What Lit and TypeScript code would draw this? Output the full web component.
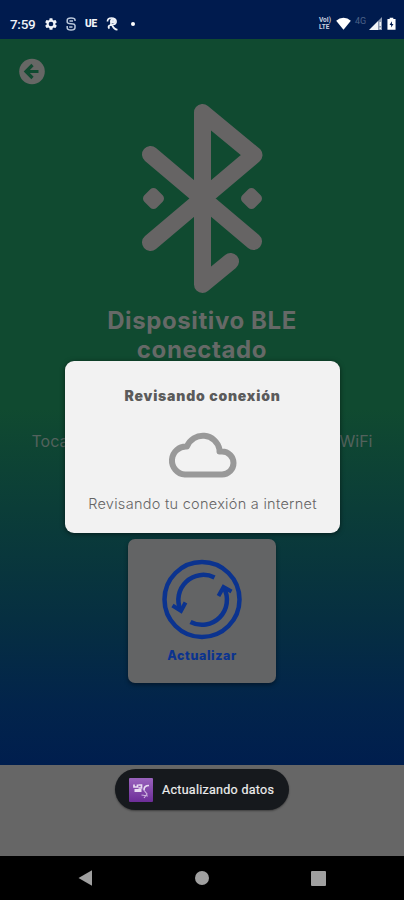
import { LitElement, html, css } from "lit";
import { customElement } from "lit/decorators.js";

@customElement("status-bar")
class StatusBar extends LitElement {
  static styles = css`
    :host { display: flex; height: 39px; background: #001b4e; box-sizing: border-box; padding: 8px 8px 0 10px; align-items: center; justify-content: space-between; font-family: Roboto, sans-serif; color: #f0f3f8; }
    .side { display: flex; align-items: center; }
    .time { font-size: 13.5px; font-weight: 500; letter-spacing: -0.3px; width: 34px; }
    svg { display: block; }
    .ue { font-size: 10px; font-weight: 900; letter-spacing: -0.2px; width: 21px; }
    .volte { display: flex; flex-direction: column; font-size: 6.5px; font-weight: 700; width: 17px; color: #cbd3e0; }
    .volte span { display: block; height: 7px; line-height: 7px; }
    .net { font-size: 9px; color: #4c6287; width: 14px; padding-bottom: 5px; }
    .gear { margin-right: 7px; }
    .shazam { margin-right: 8px; }
    .wifi { margin-right: 4px; }
    .signal { margin-right: 5px; }
    .dot { width: 4px; height: 4px; border-radius: 50%; background: #fff; margin-left: 12px; }
  `;
  render() {
    return html`
      <div class="side">
        <span class="time">7:59</span>
        <svg class="gear" width="14" height="14" viewBox="0 0 24 24" fill="#f0f3f8"><path fill-rule="evenodd" d="M19.4 13a7.500 7.500 0 0 0 0-2l2.200-1.700a.5.5 0 0 0 .1-.6l-2-3.500a.5.5 0 0 0-.6-.2l-2.500 1a7.300 7.300 0 0 0-1.700-1l-.4-2.600a.5.5 0 0 0-.5-.4h-4a.5.5 0 0 0-.5.4L9.100 5a7.700 7.700 0 0 0-1.700 1l-2.500-1a.5.5 0 0 0-.6.2l-2 3.500a.5.5 0 0 0 .1.600L4.600 11a8 8 0 0 0 0 2l-2.200 1.700a.5.5 0 0 0-.1.600l2 3.500c.1.200.4.300.6.200l2.500-1a7.300 7.300 0 0 0 1.700 1l.4 2.600c0 .2.200.4.500.4h4c.2 0 .5-.2.500-.4l.4-2.600a7.700 7.700 0 0 0 1.700-1l2.500 1c.2.100.5 0 .6-.2l2-3.500a.5.5 0 0 0-.1-.6zM12 16a4 4 0 1 1 0-8 4 4 0 0 1 0 8z"/></svg>
        <svg class="shazam" width="12" height="14" viewBox="0 0 12 14" fill="none" stroke="#bccadd" stroke-width="1.500"><path d="M10 4V3Q10 1 6 1T2.200 3.500V5Q2.200 6.700 6 6.700T10 8.500V10.500Q10 13 6 13T2.200 10.500V9M4.500 4H8M4.200 10H7.500"/></svg>
        <span class="ue">UE</span>
        <svg width="13" height="14" viewBox="0 0 13 14" fill="none" stroke="#f0f3f8" stroke-width="1.700"><path d="M1.500 4.500Q1.500 1 5.500 1T10 4T7 7.500L3.500 8.500Q1.500 10 3.500 11.500M6 8Q8.500 13 11.500 12.500M5 3.500V8"/><circle cx="7" cy="3.800" r="1.900" fill="#d5dce8"/></svg>
        <i class="dot"></i>
      </div>
      <div class="side">
        <div class="volte"><span>VoI)</span><span>LTE</span></div>
        <svg class="wifi" width="15" height="13" viewBox="0 0 15 13"><path fill="#fff" d="M7.500 12.800L.2 3.700Q3.300.7 7.500.7T14.800 3.700Z"/></svg>
        <span class="net">4G</span>
        <svg class="signal" width="13" height="13" viewBox="0 0 13 13"><path fill="#f3f5f8" d="M0 13L9 4V13Z"/><path fill="#8e9ab2" d="M9 4L13 0V13H9Z"/><path fill="#f3f5f8" d="M10.500 5H12V9H10.500ZM10.500 10.500H12V12H10.500Z"/></svg>
        <svg width="9" height="14" viewBox="0 0 10 14"><path fill="#fff" d="M3 0H7V1.500H9.500V13.500H.5V1.500H3Z"/><path fill="#001b4e" d="M5.500 4L2.800 8H4.600V11L7.200 7H5.500Z"/></svg>
      </div>`;
  }
}

@customElement("bluetooth-mark")
class BluetoothMark extends LitElement {
  static styles = css`:host { display: block; width: 124px; height: 192px; } svg { display: block; }`;
  render() {
    return html`<svg width="124" height="192" viewBox="140 102 124 192" fill="none" stroke="#666464" stroke-width="17" stroke-linecap="round" stroke-linejoin="round">
      <path d="M150.500 154.500L253.500 241.500M150.500 242.500L254 155L202.500 112.500V284.500L230.500 261.500"/>
      <g fill="#666464" stroke-width="9"><path d="M153.500 192.500L159.500 198.500L153.500 204.500L147.500 198.500Z"/><path d="M251.500 192.500L257.500 198.500L251.500 204.500L245.500 198.500Z"/></g>
    </svg>`;
  }
}

@customElement("nav-bar")
class NavBar extends LitElement {
  static styles = css`:host { display: flex; height: 44px; background: #000; justify-content: space-between; align-items: center; padding: 0 78px; box-sizing: border-box; } svg { display: block; }`;
  render() {
    return html`
      <svg width="15" height="16" viewBox="0 0 15 16"><path fill="#a0a0a0" d="M.5 8L14 .3V15.700Z"/></svg>
      <svg width="14" height="14" viewBox="0 0 14 14"><circle cx="7" cy="7" r="7" fill="#a0a0a0"/></svg>
      <svg width="15" height="15" viewBox="0 0 15 15"><rect width="15" height="15" rx="1" fill="#a0a0a0"/></svg>`;
  }
}

@customElement("app-root")
class AppRoot extends LitElement {
  static styles = css`
    :host { display: block; position: relative; width: 404px; height: 900px; overflow: hidden; background: #666; font-family: Inter, sans-serif; }
    .page { height: 726px; background: linear-gradient(#104a30 0px, #104a30 370px, #0b3d38 470px, #062f41 580px, #02244b 665px, #001e4e 726px); display: flex; flex-direction: column; align-items: center; color: #666967; }
    .back { align-self: flex-start; margin: 19px 0 0 19px; display: block; flex: none; }
    bluetooth-mark { margin-top: 17px; }
    h1 { margin: 12px 0 0; height: 58px; font-size: 24px; line-height: 29px; font-weight: 700; letter-spacing: 0.6px; text-align: center; width: 221px; }
    .hint { margin: 66px 0 0; width: 341px; font-size: 16px; line-height: 22px; display: flex; justify-content: space-between; color: #53625d; }
    .tile { margin-top: 87px; width: 148px; height: 144px; border-radius: 7px; background: #636465; display: flex; flex-direction: column; align-items: center; box-sizing: border-box; padding-top: 20px; box-shadow: 0 2px 4px #0006; color: #0b338f; font-size: 12.5px; line-height: 18px; font-weight: 800; letter-spacing: 0.6px; }
    .tile svg { display: block; margin-bottom: 7px; }
    .blank { height: 91px; }
    .dialog { position: absolute; left: 65px; top: 361px; width: 275px; height: 172px; border-radius: 9px; background: #f2f2f2; box-shadow: 0 1px 5px #0008; display: flex; flex-direction: column; align-items: center; }
    .title { margin-top: 25px; font-size: 14px; line-height: 20px; font-weight: 900; letter-spacing: 0.8px; color: #5b5b5b; }
    .cloud { display: block; margin: 24px 0 16px; }
    .text { font-size: 14.5px; line-height: 20px; font-weight: 300; letter-spacing: 0.28px; color: #656565; white-space: nowrap; }
    .toast { position: absolute; left: 115px; top: 769px; width: 174px; height: 41px; border-radius: 21px; background: #16191d; box-shadow: 0 1px 2px #0006; display: flex; align-items: center; box-sizing: border-box; padding-left: 14px; gap: 9px; font: 400 12.5px Roboto, sans-serif; letter-spacing: 0.28px; color: #eee; white-space: nowrap; }
    .toast span { -webkit-text-stroke: 0.2px #eee; }
  `;
  render() {
    return html`
      <status-bar></status-bar>
      <main class="page">
        <svg class="back" width="26" height="27" viewBox="0 0 26 27"><circle cx="13" cy="13.500" r="12.800" fill="#666765"/><path d="M19.500 13.500H7.500M13.500 7L7 13.500L13.500 20" fill="none" stroke="#104a30" stroke-width="3.200"/></svg>
        <bluetooth-mark></bluetooth-mark>
        <h1>Dispositivo BLE conectado</h1>
        <div class="hint"><span>Toca</span><span>WiFi</span></div>
        <section class="tile">
          <svg width="80" height="81" viewBox="0 0 80 81" fill="none" stroke="#0b338f" stroke-width="4.500">
            <circle cx="40" cy="40.500" r="37.500"/>
            <path d="M52.500 18.500A25 25 0 0 0 18.500 51M28.500 63A25 25 0 0 0 62 29"/>
            <path stroke-width="4" d="M10.500 46.500L19 52L23.500 43.500M56.500 37L61.500 28L69.500 32.500"/>
          </svg>
          Actualizar
        </section>
      </main>
      <div class="blank"></div>
      <nav-bar></nav-bar>
      <section class="dialog">
        <div class="title">Revisando conexión</div>
        <svg class="cloud" width="70" height="48" viewBox="0 0 70 48" fill="none" stroke="#999" stroke-width="6" stroke-linejoin="round"><path d="M17 44.500H54A11.500 11.500 0 0 0 54 21.500H51.500V19.500A17 17 0 0 0 19 16.500A14 14 0 0 0 17 44.500Z"/></svg>
        <div class="text">Revisando tu conexión a internet</div>
      </section>
      <div class="toast">
        <svg width="24" height="24" viewBox="0 0 24 24"><defs><linearGradient id="g" x1="0" y1="0" x2="0" y2="1"><stop offset="0" stop-color="#9a63bd"/><stop offset="1" stop-color="#6c2d98"/></linearGradient></defs><rect width="24" height="24" rx="1" fill="url(#g)"/><g fill="none" stroke="#e9dcf2" stroke-width="1.700"><path d="M5 6.500V9H8.500V6.500M9.500 7H12.500V10H9.500"/><path stroke-width="3" d="M5.500 12.500H12.500"/><path d="M20 7.500Q15 7.500 15 12"/><path stroke-width="1.200" stroke="#cdb3de" d="M14 11L18 16L15 20M12.500 17L19 18"/></g></svg>
        <span>Actualizando datos</span>
      </div>`;
  }
}
